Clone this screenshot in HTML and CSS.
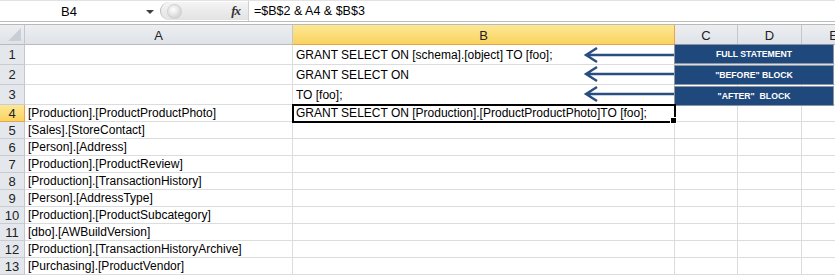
FILE: index.html
```html
<!DOCTYPE html>
<html lang="en">
<head>
    <meta charset="UTF-8">
    <title>GRANT SELECT builder</title>
    <link rel="stylesheet" href="styles.css">
</head>
<body>
    <div class="formula-bar">
        <div class="name-box">
            <span class="name">B4</span>
            <span class="drop"></span>
        </div>
        <div class="fx-area">
            <span class="knob"></span>
            <span class="fx">fx</span>
        </div>
        <div class="formula">=$B$2 &amp; A4 &amp; $B$3</div>
    </div>
    <div class="bar-gap"></div>

    <div class="sheet">
        <div class="hd corner"></div>
        <div class="hd col">A</div>
        <div class="hd col sel">B</div>
        <div class="hd col">C</div>
        <div class="hd col">D</div>
        <div class="hd col">E</div>

        <div class="hd row">1</div>
        <div class="cell"></div>
        <div class="cell">GRANT SELECT ON [schema].[object] TO [foo];</div>
        <div class="cell"></div><div class="cell"></div><div class="cell"></div>

        <div class="hd row">2</div>
        <div class="cell"></div>
        <div class="cell">GRANT SELECT ON</div>
        <div class="cell"></div><div class="cell"></div><div class="cell"></div>

        <div class="hd row">3</div>
        <div class="cell"></div>
        <div class="cell">TO [foo];</div>
        <div class="cell"></div><div class="cell"></div><div class="cell"></div>

        <div class="hd row sel">4</div>
        <div class="cell">[Production].[ProductProductPhoto]</div>
        <div class="cell active">GRANT SELECT ON [Production].[ProductProductPhoto]TO [foo];</div>
        <div class="cell"></div><div class="cell"></div><div class="cell"></div>

        <div class="hd row">5</div>
        <div class="cell">[Sales].[StoreContact]</div>
        <div class="cell"></div><div class="cell"></div><div class="cell"></div><div class="cell"></div>

        <div class="hd row">6</div>
        <div class="cell">[Person].[Address]</div>
        <div class="cell"></div><div class="cell"></div><div class="cell"></div><div class="cell"></div>

        <div class="hd row">7</div>
        <div class="cell">[Production].[ProductReview]</div>
        <div class="cell"></div><div class="cell"></div><div class="cell"></div><div class="cell"></div>

        <div class="hd row">8</div>
        <div class="cell">[Production].[TransactionHistory]</div>
        <div class="cell"></div><div class="cell"></div><div class="cell"></div><div class="cell"></div>

        <div class="hd row">9</div>
        <div class="cell">[Person].[AddressType]</div>
        <div class="cell"></div><div class="cell"></div><div class="cell"></div><div class="cell"></div>

        <div class="hd row">10</div>
        <div class="cell">[Production].[ProductSubcategory]</div>
        <div class="cell"></div><div class="cell"></div><div class="cell"></div><div class="cell"></div>

        <div class="hd row">11</div>
        <div class="cell">[dbo].[AWBuildVersion]</div>
        <div class="cell"></div><div class="cell"></div><div class="cell"></div><div class="cell"></div>

        <div class="hd row">12</div>
        <div class="cell">[Production].[TransactionHistoryArchive]</div>
        <div class="cell"></div><div class="cell"></div><div class="cell"></div><div class="cell"></div>

        <div class="hd row">13</div>
        <div class="cell">[Purchasing].[ProductVendor]</div>
        <div class="cell"></div><div class="cell"></div><div class="cell"></div><div class="cell"></div>

        <!-- drawn shapes on top of the grid -->
        <svg class="arrows" width="96" height="62" viewBox="0 0 96 62">
            <g fill="none" stroke="#2a4e80" stroke-width="2.4">
                <path d="M95 10 H6 M17 3 L6 10 L17 17"/>
                <path d="M95 29 H6 M17 22 L6 29 L17 36"/>
                <path d="M95 49 H6 M17 42 L6 49 L17 56"/>
            </g>
        </svg>
        <div class="labels">
            <div class="label">FULL STATEMENT</div>
            <div class="label">"BEFORE" BLOCK</div>
            <div class="label">"AFTER"&nbsp; BLOCK</div>
        </div>
    </div>
</body>
</html>
```

FILE: styles.css
```css
body {
    margin: 0;
    width: 835px;
    height: 276px;
    overflow: hidden;
    background: #fff;
    font-family: "Liberation Sans", Arial, sans-serif;
}
.formula-bar {
    display: flex;
    border-top: 1px solid #e2e2e2;
    border-bottom: 1px solid #bcbcbc;
    box-sizing: border-box;
    height: 22px;
}
.name-box {
    width: 160px;
    display: flex;
    align-items: center;
}
.name {
    flex: 1;
    text-align: center;
    font-size: 13px;
    color: #000;
    padding-left: 2px;
}
.drop {
    width: 0;
    height: 0;
    border-left: 4px solid transparent;
    border-right: 4px solid transparent;
    border-top: 4px solid #404040;
    margin-right: 6px;
    margin-left: 10px;
    margin-top: 1px;
}
.fx-area {
    width: 88px;
    display: flex;
    align-items: center;
    justify-content: space-between;
    background: linear-gradient(#f4f4f4, #e3e3e3);
    border-left: 1px solid #bdbdbd;
    border-radius: 10px 0 0 10px;
    margin: 1px 0;
    box-sizing: border-box;
}
.knob {
    width: 13px;
    height: 13px;
    border-radius: 50%;
    margin-left: 6px;
    background: radial-gradient(circle at 40% 35%, #ffffff, #d6d6d6 70%, #c2c2c2);
    border: 1px solid #cfcfcf;
}
.fx {
    font-family: "Liberation Serif", "Times New Roman", serif;
    font-style: italic;
    font-weight: bold;
    font-size: 13px;
    color: #333;
    margin-right: 8px;
    letter-spacing: -1px;
}
.formula {
    flex: 1;
    font-size: 12.5px;
    line-height: 20px;
    padding-left: 5px;
    border-left: 1px solid #d0d0d0;
}
.bar-gap {
    height: 2px;
    border-bottom: 1px solid #b9b9b9;
}
.sheet {
    position: relative;
    display: grid;
    grid-template-columns: 25px 268px 382px 63px 64px 64px;
    grid-template-rows: 20px 20px 20px 20px repeat(10, 17px);
    font-size: 12px;
}
.hd {
    background: linear-gradient(#eceef1, #dfe3e8);
    color: #222;
    border-right: 1px solid #c3c7cd;
    border-bottom: 1px solid #b8bcc2;
    box-sizing: border-box;
    display: flex;
    align-items: center;
    justify-content: center;
}
.hd.col {
    font-size: 13px;
    padding-top: 1px;
}
.hd.row {
    background: #e4e8ed;
    font-size: 13px;
    border-bottom-color: #c9cdd2;
}
.hd.sel {
    background: linear-gradient(#fde795, #f9d35f);
    border-right-color: #e9a44b;
    border-bottom-color: #e9a44b;
}
.corner {
    position: relative;
}
.corner::after {
    content: "";
    position: absolute;
    right: 3px;
    bottom: 3px;
    border-left: 13px solid transparent;
    border-bottom: 13px solid #c9ced5;
}
.cell {
    border-right: 1px solid #dadcdd;
    border-bottom: 1px solid #dadcdd;
    box-sizing: border-box;
    padding: 0 3px;
    white-space: nowrap;
    display: flex;
    align-items: center;
    color: #000;
}
.cell.active {
    position: relative;
    outline: 2px solid #000;
    outline-offset: -1px;
    z-index: 2;
}
.cell.active::after {
    content: "";
    position: absolute;
    right: -3px;
    bottom: -3px;
    width: 5px;
    height: 5px;
    background: #000;
    border: 1px solid #fff;
}
.arrows {
    position: absolute;
    left: 580px;
    top: 20px;
}
.labels {
    position: absolute;
    left: 674px;
    top: 19px;
    width: 160px;
    display: flex;
    flex-direction: column;
}
.label {
    height: 20px;
    box-sizing: border-box;
    background: #1f497d;
    border: 1px solid #8a96a6;
    margin-bottom: 1px;
    color: #fff;
    font-weight: bold;
    font-size: 8.7px;
    display: flex;
    align-items: center;
    justify-content: center;
    white-space: pre;
}
```
